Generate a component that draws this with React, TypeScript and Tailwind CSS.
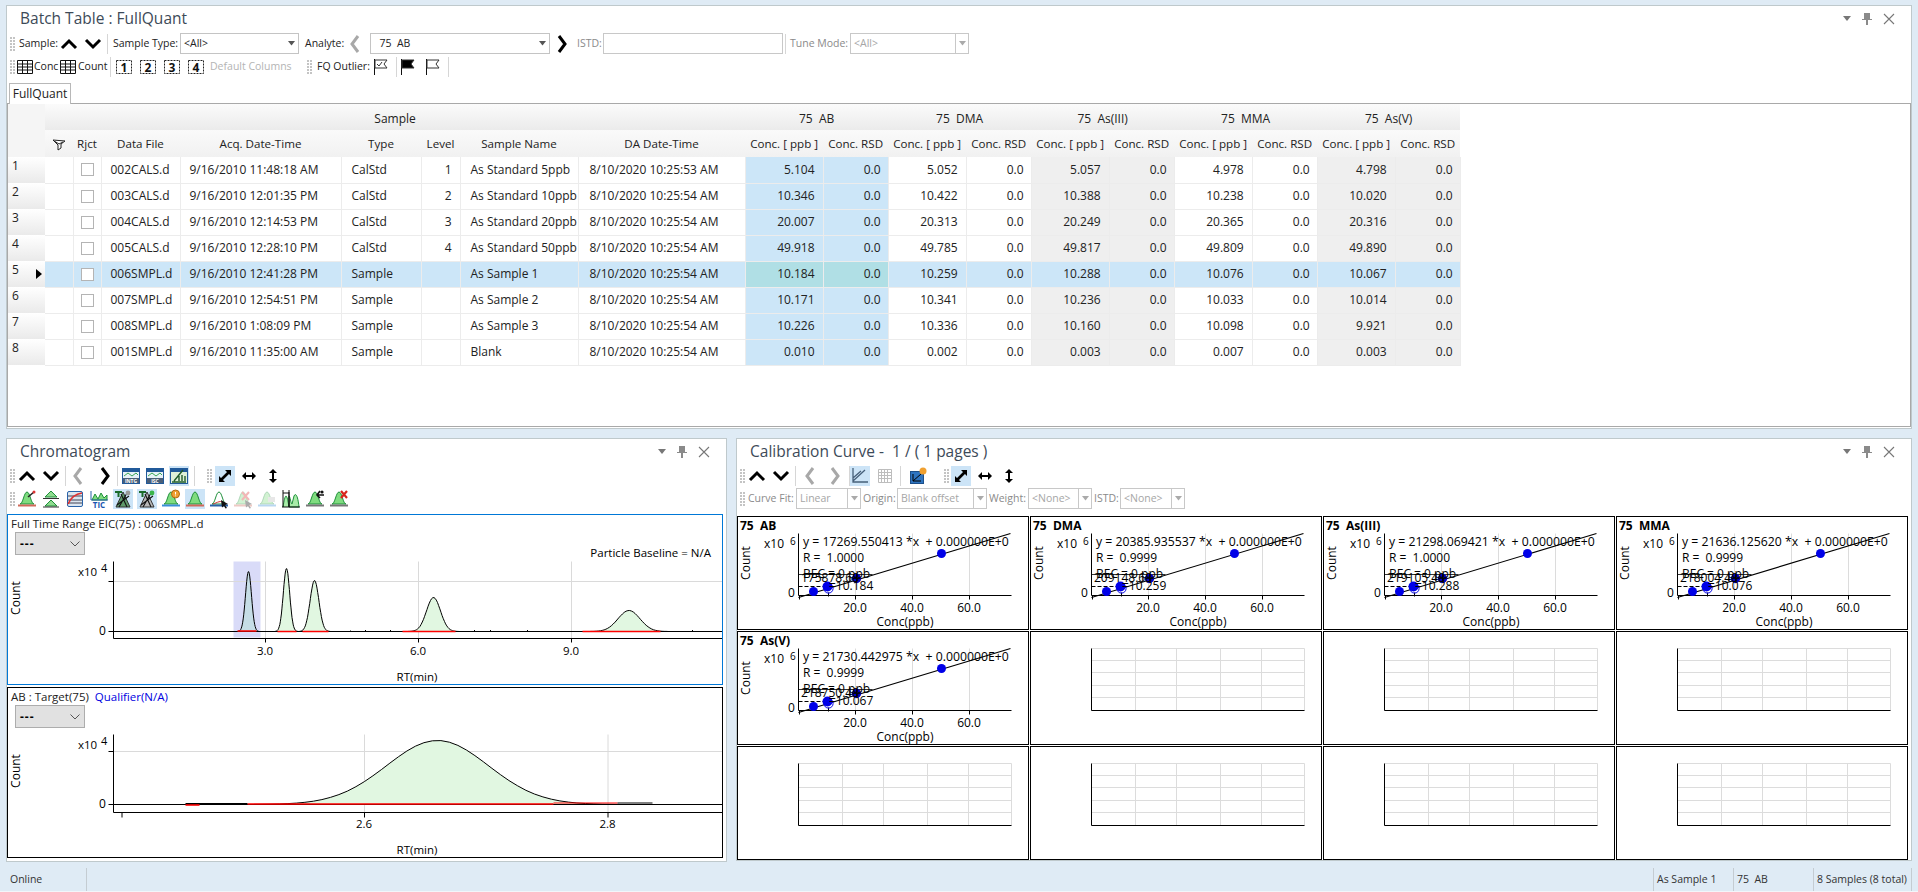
import React from "react";

const gaussPts = (cx: number, top: number, s: number, base: number) => {
  const pts: string[] = [];
  for (let x = cx - 3.6 * s; x <= cx + 3.6 * s; x += Math.max(s / 6, 0.5)) {
    const y = base - (base - top) * Math.exp(-((x - cx) ** 2) / (2 * s * s));
    pts.push(`${x.toFixed(1)},${y.toFixed(1)}`);
  }
  return pts;
};

const Grip = () => (
  <svg width="6" height="16" viewBox="0 0 6 16" className="shrink-0">
    {[1, 4, 7, 10, 13].flatMap((y) => [1, 4].map((x) => <rect key={`${x}-${y}`} x={x} y={y} width="2" height="2" fill="#c4c4c4" />))}
  </svg>
);
const Sep = ({ c = "mx-[2px]" }: { c?: string }) => <div className={`w-px h-[20px] bg-[#d6d6d6] shrink-0 ${c}`} />;

const Chev = ({ d, dim }: { d: "u" | "d" | "l" | "r"; dim?: boolean }) => {
  const p = { u: "M2 13 L9 6 L16 13", d: "M2 5 L9 12 L16 5", l: "M12 1 L6 9 L12 17", r: "M6 1 L12 9 L6 17" }[d];
  return (
    <svg width="18" height="18" viewBox="0 0 18 18">
      <path d={p} fill="none" stroke={dim ? "#a8a8a8" : "#000"} strokeWidth="3" />
    </svg>
  );
};
const Btn = ({ active, children, c = "mx-[2px]" }: { active?: boolean; children: React.ReactNode; c?: string }) => (
  <div className={`w-[20px] h-[20px] flex items-center justify-center shrink-0 ${c} ${active ? "bg-[#cce4f7]" : ""}`}>{children}</div>
);
const ExpandBoth = () => (
  <svg width="16" height="16" viewBox="0 0 16 16">
    <path d="M4 12 L12 4" stroke="#000" strokeWidth="2.6" />
    <path d="M8 2 H14 V8 Z M2 8 V14 H8 Z" fill="#000" />
  </svg>
);
const ExpandH = () => (
  <svg width="16" height="16" viewBox="0 0 16 16">
    <path d="M4 8 H12" stroke="#000" strokeWidth="2" />
    <path d="M5 4 V12 L1 8 Z M11 4 V12 L15 8 Z" fill="#000" />
  </svg>
);
const ExpandV = () => (
  <svg width="16" height="16" viewBox="0 0 16 16">
    <path d="M8 4 V12" stroke="#000" strokeWidth="2" />
    <path d="M4 5 H12 L8 1 Z M4 11 H12 L8 15 Z" fill="#000" />
  </svg>
);

const PanelControls = () => (
  <div className="flex items-center gap-[11px] shrink-0">
    <svg width="8" height="6" viewBox="0 0 8 6"><path d="M0 0 H8 L4 5 Z" fill="#777" /></svg>
    <svg width="10" height="14" viewBox="0 0 10 14"><path d="M2 1 H8 V7 H10 V8 H6 V13 H4 V8 H0 V7 H2 Z" fill="#8a8a8a" /></svg>
    <svg width="12" height="12" viewBox="0 0 12 12"><path d="M1 1 L11 11 M11 1 L1 11" stroke="#777" strokeWidth="1.1" /></svg>
  </div>
);

const Title = ({ text, c }: { text: string; c: string }) => (
  <div className={`flex items-center justify-between h-[26px] shrink-0 ${c}`}>
    <span className="text-[15.5px] text-[#3d4a58] whitespace-pre">{text}</span>
    <PanelControls />
  </div>
);

const Combo = ({ text, w, disabled, split }: { text: string; w: string; disabled?: boolean; split?: boolean }) => (
  <div className={`flex items-center h-[21px] border shrink-0 text-[10.5px] ${w} ${disabled ? "border-[#c8c8c8] text-[#a6a6a6]" : "border-[#c4c4c4] text-[#222]"}`}>
    <span className="pl-[3px] flex-1 whitespace-pre truncate">{text}</span>
    <div className={`w-[13px] h-full flex items-center justify-center ${split ? "border-l border-[#c8c8c8]" : ""}`}>
      <svg width="7" height="5" viewBox="0 0 7 5"><path d="M0 0 H7 L3.5 4.5 Z" fill={disabled ? "#aaa" : "#555"} /></svg>
    </div>
  </div>
);
const Lbl = ({ t, c = "", dim }: { t: string; c?: string; dim?: boolean }) => (
  <span className={`text-[10.5px] whitespace-pre shrink-0 ${dim ? "text-[#8a8a8a]" : "text-[#222]"} ${c}`}>{t}</span>
);

const TableIcon = () => (
  <svg width="16" height="14" viewBox="0 0 16 14" className="shrink-0">
    <path d="M.5.5 H15.5 V13.5 H.5 Z M.5 4 H15.5 M.5 7 H15.5 M.5 10 H15.5 M5.5 .5 V13.5 M10.5 .5 V13.5" fill="none" stroke="#111" />
  </svg>
);
const NumIcon = ({ n }: { n: number }) => (
  <svg width="16" height="14" viewBox="0 0 16 14">
    <rect x=".5" y=".5" width="15" height="13" fill="#fff" stroke="#222" strokeDasharray="2 1" />
    <text x="8" y="11.5" textAnchor="middle" className="text-[12px] font-bold" fill="#111">{n}</text>
  </svg>
);
const Flag = ({ fill, check }: { fill?: boolean; check?: boolean }) => (
  <svg width="16" height="18" viewBox="0 0 16 18">
    <path d="M1.5 1 V17" stroke="#111" />
    <path d="M2 2 H14 L11 6 L14 10 H2 Z" fill={fill ? "#000" : "#fff"} stroke="#333" />
    {check && <path d="M4 6 L6 8 L9 4" fill="none" stroke="#333" />}
  </svg>
);

/* ------- peak toolbar icons ------- */
const PEAK = "M3 15 C6 15 7 3 10 3 C13 3 14 15 17 15 Z";
const Pk = ({ base = "#d06a5a", fill = "#7fdc7f", stroke = "#1e8f3a", dim, children }: { base?: string; fill?: string; stroke?: string; dim?: boolean; children?: React.ReactNode }) => (
  <svg width="20" height="20" viewBox="0 0 20 20" opacity={dim ? 0.35 : 1}>
    <path d={PEAK} fill={fill} stroke={stroke} />
    <path d="M1 16.5 H19" stroke={base} strokeWidth="2" />
    {children}
  </svg>
);
const Cursor = () => <path d="M12 11 L19 15 L16 16 L18 19 L16.5 19.5 L15 17 L13 18.5 Z" fill="#111" />;
const TicTree = ({ g }: { g?: boolean }) => (
  <svg width="20" height="20" viewBox="0 0 20 20">
    <path d="M10 3 L17 18 H3 Z" fill={g ? "#b8b8b8" : "#5e9a6a"} stroke="#333" />
    <path d="M4 16 L16 7 M6 18 L14 4 M14 18 L8 5" stroke="#111" strokeWidth="1.1" />
    <path d="M2 3 H9 M5.5 3 V8" stroke="#1a6b2a" strokeWidth="2" />
    <circle cx="15" cy="4" r="2.4" fill={g ? "#3ab54a" : "#9a9a9a"} />
  </svg>
);
const MonitorIcon = ({ t, active }: { t: string; active?: boolean }) => (
  <svg width="18" height="18" viewBox="0 0 18 18">
    <rect x=".5" y="1.5" width="17" height="15" fill={active ? "#dff1d8" : "#e8f2f8"} stroke="#215a9a" />
    <rect x="1" y="2" width="16" height="3" fill="#215a9a" />
    {active ? (
      <path d="M4 14 L13 3 M2 15 H16 M9 14 V9 M12 14 V8 M15 14 V9" stroke="#1f5c2a" strokeWidth="1.4" />
    ) : (
      <>
        <path d="M2 9 L6 6 L10 9 L14 6 L16 8" fill="none" stroke="#3aa655" />
        <rect x="1" y="11" width="16" height="5" fill="#4a5f78" />
        <text x="9" y="15.5" textAnchor="middle" fill="#fff" className="text-[5px] font-bold">{t}</text>
      </>
    )}
  </svg>
);

const ChromRow2 = () => (
  <div className="flex items-center h-[24px] pl-[2px]">
    <Grip />
    <Btn><Pk><path d="M11 8 L17 3" stroke="#222" strokeWidth="1.6" /><circle cx="17" cy="3" r="1.5" fill="#d33" /></Pk></Btn>
    <Btn>
      <svg width="20" height="20" viewBox="0 0 20 20">
        <path d="M10 2 L16 8 H4 Z M10 11 L16 17 H4 Z" fill="#8fdc8f" stroke="#1e8f3a" />
        <path d="M2 9.5 H18 M2 18 H18" stroke="#333" />
      </svg>
    </Btn>
    <Btn>
      <svg width="20" height="20" viewBox="0 0 20 20">
        <rect x="2.5" y="2.5" width="15" height="15" rx="1.5" fill="#dbe6f0" stroke="#2a63a8" />
        <path d="M3 7 H17 M3 11 H17 M3 14 H17" stroke="#445" />
        <path d="M3 15 C6 8 10 5 17 4" fill="none" stroke="#d33" strokeWidth="1.6" />
      </svg>
    </Btn>
    <Btn>
      <svg width="20" height="20" viewBox="0 0 20 20">
        <path d="M3 11 L6 5 L9 10 L12 4 L15 9 L18 6 V11 Z" fill="#7fdc7f" stroke="#1e8f3a" />
        <path d="M2 2 V11 H19" fill="none" stroke="#2a63a8" />
        <text x="10" y="19" textAnchor="middle" fill="#1a55b0" className="text-[8px] font-bold">TIC</text>
      </svg>
    </Btn>
    <Btn active><TicTree /></Btn>
    <Btn active><TicTree g /></Btn>
    <Btn><Pk base="#3a8fd8"><circle cx="14.5" cy="5" r="4" fill="#f0a030" stroke="#b06a10" /><path d="M14.5 3 V5.5 M14.5 6.5 V7.2" stroke="#fff" /></Pk></Btn>
    <Btn active><Pk /></Btn>
    <Btn><Pk fill="#fff" stroke="#1e8f3a" base="#2a63a8"><path d="M4 15 C8 14 12 10 16 15" stroke="#c33" fill="none" /><Cursor /></Pk></Btn>
    <Btn><Pk dim><path d="M9 3 L16 11 M16 3 L9 11" stroke="#d33" strokeWidth="2" /><Cursor /></Pk></Btn>
    <Btn><Pk dim base="#3a8fd8"><path d="M11 8 H18 V13 H11 Z" fill="#bbb" /></Pk></Btn>
    <Btn>
      <svg width="20" height="20" viewBox="0 0 20 20">
        <path d="M8 18 V7 C9 7 10 15 11 15 L13 7 C15 3 17 8 18 18 Z M2 18 C3 12 4 7 5 7 C6 7 7 12 8 18" fill="#a8eca8" stroke="#1e8f3a" />
        <path d="M2 1 V18 M8 1 V18 M2 4 H8 M1 18 H19 M8 3 V18" stroke="#111" />
      </svg>
    </Btn>
    <Btn><Pk base="#777"><path d="M12 6 H19 M15 2 L12 6 L15 9" fill="none" stroke="#111" strokeWidth="1.6" /><circle cx="17" cy="3" r="1.6" fill="#111" /></Pk></Btn>
    <Btn><Pk base="#777"><path d="M12 2 L18 9 M18 2 L12 9" stroke="#d8261c" strokeWidth="2.2" /></Pk></Btn>
  </div>
);

const ChromRow1 = () => (
  <div className="flex items-center h-[22px] pl-[2px]">
    <Grip />
    <Btn><Chev d="u" /></Btn>
    <Btn><Chev d="d" /></Btn>
    <Sep c="ml-[2px] mr-0" />
    <Btn c="mx-[2px]"><Chev d="l" dim /></Btn>
    <Btn c="ml-[5px] mr-[2px]"><Chev d="r" /></Btn>
    <Sep c="mx-0" />
    <Btn c="ml-[3px] mr-[2px]"><MonitorIcon t="INTG" /></Btn>
    <Btn><MonitorIcon t="ISC" /></Btn>
    <Btn active><MonitorIcon t="" active /></Btn>
    <Sep c="ml-[3px] mr-[11px]" />
    <Grip />
    <Btn active c="ml-[3px] mr-[2px]"><ExpandBoth /></Btn>
    <Btn><ExpandH /></Btn>
    <Btn c="mx-[2px]"><ExpandV /></Btn>
  </div>
);

const TraceSelect = () => (
  <div className="flex items-center justify-between w-[70px] h-[23px] bg-[#e1e1e1] border border-[#adadad] ml-[4px] px-[4px] text-[12px] text-black">
    <span className="font-bold tracking-[1px]">---</span>
    <svg width="10" height="6" viewBox="0 0 10 6"><path d="M.5.5 L5 5 L9.5.5" fill="none" stroke="#555" /></svg>
  </div>
);

const t12 = "text-[12px] whitespace-pre";
const t11 = "text-[11.5px] whitespace-pre";

const TopPlot = () => {
  const peaks = [
    [248, 570, 3],
    [286, 567, 3.2],
    [314, 579, 4.4],
    [433, 596, 7],
    [628.5, 609, 11],
  ];
  return (
    <svg viewBox="8 514 714 169" className="block w-[714px] h-[169px]">
      <g transform="translate(.5 .5)">
        <rect x="233" y="560" width="27" height="76" fill="#d9dbf8" />
        {[265, 418, 571].map((x) => <path key={x} d={`M${x} 560 V637`} stroke="#dadada" />)}
        <path d="M113 580 H722" stroke="#dadada" />
        {peaks.map(([c, t, s], i) => {
          const p = gaussPts(c, t, s, 630);
          return (
            <g key={i}>
              <polygon points={p.join(" ")} fill={i === 0 ? "#c6dde6" : "#e1f7e1"} />
              <polyline points={p.join(" ")} fill="none" stroke="#000" />
            </g>
          );
        })}
        <path d="M113 630 H722" stroke="#000" />
        <path d="M237 629.5 H256 M277 630 H296 M302 630 H328 M402 630 H455 M582 630 H660" stroke="#f00" strokeWidth="1.3" />
        <path d="M350 630 V629 M365 630 V628.5 M390 630 V628.5 M474 630 V628.5 M490 630 V628.5 M527 630 V628.5 M692 630 V628.5" stroke="#000" />
        <path d="M113 560 V637 H722 M108 580 H113 M108 630 H113 M265 637 V641 M418 637 V641 M571 637 V641" fill="none" stroke="#000" />
      </g>
      <text x="78" y="575" className={t11}>x10</text>
      <text x="101" y="571" className="text-[11px]">4</text>
      <text x="99" y="634" className={t12}>0</text>
      <text x="20" y="597" textAnchor="middle" transform="rotate(-90 20 597)" className={t12}>Count</text>
      {[[265, "3.0"], [418, "6.0"], [571, "9.0"]].map(([x, l]) => <text key={l} x={x} y="654" textAnchor="middle" className={t11}>{l}</text>)}
      <text x="417" y="680" textAnchor="middle" className={t11}>RT(min)</text>
      <text x="711" y="556" textAnchor="end" className={t11}>Particle Baseline = N/A</text>
    </svg>
  );
};

const BottomPlot = () => {
  const p = gaussPts(437, 739, 51, 803);
  return (
    <svg viewBox="8 687 714 169" className="block w-[714px] h-[169px]">
      <g transform="translate(.5 .5)">
        {[364, 607.5].map((x) => <path key={x} d={`M${x} 733 V811`} stroke="#dadada" />)}
        <path d="M113 750 H722" stroke="#dadada" />
        <polygon points={p.join(" ")} fill="#e1f7e1" />
        <polyline points={p.join(" ")} fill="none" stroke="#000" />
        <path d="M113 803 H722" stroke="#000" />
        <path d="M247 802.5 H553" stroke="#f00" strokeWidth="1.4" />
        <path d="M185 803.5 H199" stroke="#f00" strokeWidth="1.6" />
        <path d="M553 801.5 H617" stroke="#f00" />
        <path d="M185 802 H247 M617 801.5 H652" stroke="#000" />
        <path d="M113 733 V811 H722 M108 750 H113 M108 803 H113 M121.5 811 V816 M364 811 V816 M607.5 811 V816" fill="none" stroke="#000" />
      </g>
      <text x="78" y="748" className={t11}>x10</text>
      <text x="101" y="744" className="text-[11px]">4</text>
      <text x="99" y="807" className={t12}>0</text>
      <text x="20" y="770" textAnchor="middle" transform="rotate(-90 20 770)" className={t12}>Count</text>
      <text x="364" y="827" textAnchor="middle" className={t11}>2.6</text>
      <text x="607.5" y="827" textAnchor="middle" className={t11}>2.8</text>
      <text x="417" y="853" textAnchor="middle" className={t11}>RT(min)</text>
    </svg>
  );
};

const CalCell = ({ title, eq, r, over, val }: { title: string; eq: string; r: string; over: string; val: string }) => (
  <div className="border border-black bg-white">
    <svg viewBox="1 1 290 112" className="block w-full h-full">
      <g transform="translate(.5 .5)">
        {[118, 175, 232].map((x) => <path key={x} d={`M${x} 17 V79`} stroke="#dcdcdc" />)}
        <path d="M61 17 V79 H274 M62 79 V83" fill="none" stroke="#000" />
        <path d="M118 79 V83 M175 79 V83 M232 79 V83" stroke="#000" />
        <path d="M61 81 L273 17" stroke="#000" strokeWidth="1.1" />
        <path d="M61 58 H135" stroke="#000" strokeWidth=".8" />
        <path d="M61 70 H91 M91 70 V81" stroke="#000" strokeDasharray="4 2" />
        <circle cx="76" cy="75" r="4.5" fill="#0000e8" />
        <circle cx="90" cy="70" r="5" fill="#0000e8" />
        <circle cx="91" cy="72" r="4.6" fill="none" stroke="#0000e8" />
        <circle cx="119" cy="62" r="4.7" fill="#0000c8" />
        <circle cx="204" cy="37" r="4.5" fill="#0000e8" />
        <path d="M115 62 H123 M119 58 V66" stroke="#002" />
      </g>
      <text x="3" y="14" className="text-[12px] font-bold whitespace-pre">{title}</text>
      <text x="66" y="30" className="text-[12.25px] whitespace-pre">{eq}</text>
      <text x="66" y="46" className={t12}>{r}</text>
      <text x="66" y="62" className={t12}>BEC = 0 ppb</text>
      <text x="64" y="66" className={t12}>{over}</text>
      <text x="92" y="74" className={t12}>{val}</text>
      <text x="27" y="32" className={t12}>x10</text>
      <text x="53" y="29" className="text-[10px]">6</text>
      <text x="51" y="81" className={t12}>0</text>
      <text x="13" y="47" textAnchor="middle" transform="rotate(-90 13 47)" className={t12}>Count</text>
      {[[118, "20.0"], [175, "40.0"], [232, "60.0"]].map(([x, l]) => <text key={l} x={x} y="96" textAnchor="middle" className={t12}>{l}</text>)}
      <text x="168" y="110" textAnchor="middle" className={t12}>Conc(ppb)</text>
    </svg>
  </div>
);

const EmptyCell = () => (
  <div className="border border-black bg-white">
    <svg viewBox="1 1 290 112" className="block w-full h-full">
      <g transform="translate(.5 .5)">
        {[105, 146, 190, 231, 274].map((x) => <path key={x} d={`M${x} 17 V79`} stroke="#dcdcdc" />)}
        {[17, 29, 41, 54, 66].map((y) => <path key={y} d={`M61 ${y} H274`} stroke="#dcdcdc" />)}
        <path d="M61 17 V79 H274" fill="none" stroke="#000" />
      </g>
    </svg>
  </div>
);

const rows = [
  ["002CALS.d", "9/16/2010 11:48:18 AM", "CalStd", "1", "As Standard 5ppb", "8/10/2020 10:25:53 AM", "5.104", "5.052", "5.057", "4.978", "4.798"],
  ["003CALS.d", "9/16/2010 12:01:35 PM", "CalStd", "2", "As Standard 10ppb", "8/10/2020 10:25:54 AM", "10.346", "10.422", "10.388", "10.238", "10.020"],
  ["004CALS.d", "9/16/2010 12:14:53 PM", "CalStd", "3", "As Standard 20ppb", "8/10/2020 10:25:54 AM", "20.007", "20.313", "20.249", "20.365", "20.316"],
  ["005CALS.d", "9/16/2010 12:28:10 PM", "CalStd", "4", "As Standard 50ppb", "8/10/2020 10:25:54 AM", "49.918", "49.785", "49.817", "49.809", "49.890"],
  ["006SMPL.d", "9/16/2010 12:41:28 PM", "Sample", "", "As Sample 1", "8/10/2020 10:25:54 AM", "10.184", "10.259", "10.288", "10.076", "10.067"],
  ["007SMPL.d", "9/16/2010 12:54:51 PM", "Sample", "", "As Sample 2", "8/10/2020 10:25:54 AM", "10.171", "10.341", "10.236", "10.033", "10.014"],
  ["008SMPL.d", "9/16/2010 1:08:09 PM", "Sample", "", "As Sample 3", "8/10/2020 10:25:54 AM", "10.226", "10.336", "10.160", "10.098", "9.921"],
  ["001SMPL.d", "9/16/2010 11:35:00 AM", "Sample", "", "Blank", "8/10/2020 10:25:54 AM", "0.010", "0.002", "0.003", "0.007", "0.003"],
];
const analytes = ["75  AB", "75  DMA", "75  As(III)", "75  MMA", "75  As(V)"];
const colW = [
  "w-[37px]", "w-[28px]", "w-[28px]", "w-[79px]", "w-[161px]", "w-[80px]", "w-[39px]", "w-[118px]", "w-[167px]",
];
const cb = "border-r border-b border-[#ececec]";
const h1 = "bg-gradient-to-b from-[#fbfbfb] to-[#ebebeb] font-normal text-center whitespace-pre p-0 pt-[3px]";
const h2 = "bg-gradient-to-b from-[#fafafa] to-[#f1f1f1] font-normal text-center whitespace-nowrap p-0 text-[11.6px]";

const BatchTable = () => (
  <table className="table-fixed border-collapse text-[12px] text-[#222] w-[1452px]">
    <colgroup>
      {colW.map((w, i) => <col key={i} className={w} />)}
      {analytes.map((a) => (
        <React.Fragment key={a}>
          <col className="w-[78px]" />
          <col className="w-[65px]" />
        </React.Fragment>
      ))}
    </colgroup>
    <thead>
      <tr className="h-[26px]">
        <th rowSpan={2} className="bg-[#f5f5f5] p-0" />
        <th colSpan={8} className={h1}>Sample</th>
        {analytes.map((a) => <th key={a} colSpan={2} className={h1}>{a}</th>)}
      </tr>
      <tr className="h-[27px]">
        <th className={h2}>
          <svg width="14" height="12" viewBox="0 0 14 12" className="inline-block">
            <path d="M1 1 L13 2 L9 5 L9 9 L6 11 L6 6 Z M3 2.5 L7 5 M11 3 L7 5" fill="#fff" stroke="#222" />
          </svg>
        </th>
        {["Rjct", "Data File", "Acq. Date-Time", "Type", "Level", "Sample Name", "DA Date-Time"].map((h) => <th key={h} className={h2}>{h}</th>)}
        {analytes.flatMap((a) => [
          <th key={a + "c"} className={h2}>Conc. [ ppb ]</th>,
          <th key={a + "r"} className={h2}>Conc. RSD</th>,
        ])}
      </tr>
    </thead>
    <tbody>
      {rows.map((r, i) => {
        const sel = i === 4;
        const rowBg = sel ? "bg-[#cce6f8]" : "bg-white";
        return (
          <tr key={i} className="h-[26px]">
            <td className="bg-gradient-to-b from-white to-[#eaeaea] p-0 align-top">
              <div className="flex items-center justify-between pl-[4px] pr-[3px] h-[25px]">
                <span className="self-start leading-[17px]">{i + 1}</span>
                {sel && <svg width="6" height="10" viewBox="0 0 6 10"><path d="M0 0 L6 5 L0 10 Z" fill="#000" /></svg>}
              </div>
            </td>
            <td className={`${rowBg} ${cb} p-0`} />
            <td className={`${rowBg} ${cb} p-0`}>
              <div className="w-[13px] h-[13px] mx-auto border border-[#b4b4b4] bg-white" />
            </td>
            <td className={`${rowBg} ${cb} pl-[9px] pr-0 whitespace-nowrap`}>{r[0]}</td>
            <td className={`${rowBg} ${cb} pl-[9px] pr-0 whitespace-nowrap`}>{r[1]}</td>
            <td className={`${rowBg} ${cb} pl-[10px] pr-0`}>{r[2]}</td>
            <td className={`${rowBg} ${cb} pr-[8px] text-right`}>{r[3]}</td>
            <td className={`${rowBg} ${cb} pl-[10px] pr-0 whitespace-nowrap`}>{r[4]}</td>
            <td className={`${rowBg} ${cb} pl-[11px] pr-0 whitespace-nowrap`}>{r[5]}</td>
            {analytes.flatMap((a, k) => {
              const bg = sel
                ? k === 0 ? "bg-[#b0dfe5]" : "bg-[#cce6f8]"
                : k === 0 ? "bg-[#cce6f8]" : k % 2 === 0 ? "bg-[#efefef]" : "bg-white";
              const edge = k === 0 ? "border-l border-l-[#8a8a8a]" : "";
              return [
                <td key={a + "c"} className={`${bg} ${cb} ${edge} pr-[8px] text-right`}>{r[6 + k]}</td>,
                <td key={a + "r"} className={`${bg} ${cb} pr-[7px] text-right`}>0.0</td>,
              ];
            })}
          </tr>
        );
      })}
    </tbody>
  </table>
);

export default function App() {
  return (
    <div className="w-[1918px] h-[892px] overflow-hidden bg-[#dfebf5] flex flex-col font-['Open_Sans','Noto_Sans',sans-serif] text-[#222]">
      <div className="flex-1 flex flex-col px-[6px] pt-[5px] min-h-0">
        {/* Batch table panel */}
        <section className="h-[424px] shrink-0 bg-white border border-[#bfc9cc] flex flex-col">
          <Title text="Batch Table : FullQuant" c="pl-[13px] pr-[16px]" />
          <div className="flex items-center h-[23px] pl-[2px] shrink-0">
            <Grip />
            <Lbl t="Sample:" c="ml-[4px] w-[39px]" />
            <Btn c="ml-[1px] mr-[4px]"><Chev d="u" /></Btn>
            <Btn c="mx-0"><Chev d="d" /></Btn>
            <Sep c="ml-[4px] mr-[5px]" />
            <Lbl t="Sample Type:" c="w-[65px]" />
            <Combo text="<All>" w="w-[119px] ml-[2px]" />
            <Lbl t="Analyte:" c="ml-[6px] w-[40px]" />
            <Btn c="mx-0"><Chev d="l" dim /></Btn>
            <Combo text="  75  AB" w="w-[180px] ml-[5px]" />
            <Btn c="ml-[2px] mr-[5px]"><Chev d="r" /></Btn>
            <Lbl t="ISTD:" dim c="w-[24px]" />
            <div className="w-[180px] h-[21px] border border-[#c8c8c8] ml-[2px] shrink-0" />
            <Sep c="ml-[2px] mr-[4px]" />
            <Lbl t="Tune Mode:" dim c="w-[58px]" />
            <Combo text="<All>" w="w-[119px] ml-[2px]" disabled split />
          </div>
          <div className="flex items-center h-[24px] pl-[2px] shrink-0">
            <Grip />
            <div className="ml-[2px]"><TableIcon /></div>
            <Lbl t="Conc" c="ml-[1px] w-[23px]" />
            <div className="ml-[3px]"><TableIcon /></div>
            <Lbl t="Count" c="ml-[2px] w-[28px]" />
            <Sep c="ml-[4px] mr-[5px]" />
            <div className="flex gap-[8px]">{[1, 2, 3, 4].map((n) => <NumIcon key={n} n={n} />)}</div>
            <Lbl t="Default Columns" c="ml-[6px] w-[81px] text-[#b4b4b4]" dim />
            <div className="ml-[15px]"><Grip /></div>
            <Lbl t="FQ Outlier:" c="ml-[5px] w-[53px]" />
            <div className="ml-[3px]"><Flag check /></div>
            <Sep c="ml-[7px] mr-[3px]" />
            <Flag fill />
            <div className="ml-[9px]"><Flag /></div>
            <Sep c="ml-[7px]" />
          </div>
          <div className="h-[3px] shrink-0" />
          <div className="h-[21px] shrink-0 flex items-end pl-[2px]">
            <div className="w-[62px] h-[21px] border border-b-0 border-[#b8b8b8] flex items-center justify-center text-[12px] -mb-px bg-white relative">FullQuant</div>
          </div>
          <div className="flex-1 min-h-0 border border-[#a9a9a9] mb-[1px] overflow-hidden">
            <BatchTable />
          </div>
        </section>

        <div className="flex gap-[9px] mt-[9px]">
          {/* Chromatogram panel */}
          <section className="w-[721px] h-[424px] shrink-0 bg-white border border-[#bfc9cc] flex flex-col">
            <Title text="Chromatogram" c="pl-[13px] pr-[16px]" />
            <ChromRow1 />
            <ChromRow2 />
            <div className="h-[3px]" />
            <div className="relative border border-[#0078d7] h-[171px] w-[716px] shrink-0">
              <TopPlot />
              <div className="absolute left-[3px] top-[1px] text-[11.5px] whitespace-pre">
                <div className="leading-[16px]">Full Time Range EIC(75) : 006SMPL.d</div>
                <TraceSelect />
              </div>
            </div>
            <div className="relative border border-black h-[171px] w-[716px] mt-[2px] shrink-0">
              <BottomPlot />
              <div className="absolute left-[3px] top-[1px] text-[11.5px] whitespace-pre">
                <div className="leading-[16px]">AB : Target(75)  <span className="text-[#0000e0]">Qualifier(N/A)</span></div>
                <TraceSelect />
              </div>
            </div>
          </section>

          {/* Calibration panel */}
          <section className="w-[1176px] h-[423px] shrink-0 bg-white border border-[#bfc9cc] flex flex-col">
            <Title text="Calibration Curve -  1 / ( 1 pages )" c="pl-[13px] pr-[16px]" />
            <div className="flex items-center h-[22px] pl-[2px] shrink-0">
              <Grip />
              <Btn c="ml-[2px] mr-[2px]"><Chev d="u" /></Btn>
              <Btn><Chev d="d" /></Btn>
              <Sep c="ml-[2px] mr-[2px]" />
              <Btn><Chev d="l" dim /></Btn>
              <Btn c="ml-[3px] mr-[2px]"><Chev d="r" dim /></Btn>
              <Sep c="ml-[2px] mr-0" />
              <Btn active c="ml-0 mr-[3px]">
                <svg width="18" height="18" viewBox="0 0 18 18">
                  <path d="M2 1 V15 H17 M2 14 L14 3 M2 11 L10 4" fill="none" stroke="#46607a" strokeWidth="1.3" />
                </svg>
              </Btn>
              <Btn>
                <svg width="14" height="14" viewBox="0 0 14 14">
                  <path d="M.5.5 H13.5 V13.5 H.5 Z M.5 3.5 H13.5 M.5 6.5 H13.5 M.5 9.5 H13.5 M3.5 .5 V13.5 M6.5 .5 V13.5 M9.5 .5 V13.5" fill="none" stroke="#bdbdbd" />
                </svg>
              </Btn>
              <Sep c="ml-[3px] mr-[5px]" />
              <Btn>
                <svg width="18" height="18" viewBox="0 0 18 18">
                  <rect x="1.5" y="4.5" width="13" height="12" fill="#2e74c0" stroke="#1c4f8a" />
                  <path d="M4 14 L12 7 M4 7 V14 H12" fill="none" stroke="#000" />
                  <circle cx="14" cy="4" r="3.5" fill="#f0a030" />
                </svg>
              </Btn>
              <Sep c="ml-[4px] mr-[8px] opacity-0" />
              <Grip />
              <Btn active c="ml-[2px] mr-[2px]"><ExpandBoth /></Btn>
              <Btn><ExpandH /></Btn>
              <Btn><ExpandV /></Btn>
            </div>
            <div className="flex items-center h-[23px] pl-[2px] shrink-0">
              <Grip />
              <Lbl t="Curve Fit:" c="ml-[3px] w-[46px]" dim />
              <Combo text="Linear" w="w-[65px] ml-[2px]" disabled split />
              <Lbl t="Origin:" c="ml-[2px] w-[32px]" dim />
              <Combo text="Blank offset" w="w-[90px] ml-[2px]" disabled split />
              <Lbl t="Weight:" c="ml-[2px] w-[37px]" dim />
              <Combo text="<None>" w="w-[64px] ml-[2px]" disabled split />
              <Lbl t="ISTD:" c="ml-[2px] w-[26px]" dim />
              <Combo text="<None>" w="w-[65px]" disabled split />
            </div>
            <div className="h-[6px] shrink-0" />
            <div className="grid grid-cols-[repeat(4,292px)] grid-rows-[repeat(3,114px)] gap-[1px] w-fit">
              <CalCell title="75  AB" eq="y = 17269.550413 *x  + 0.000000E+0" r="R =  1.0000" over="175878.68" val="=10.184" />
              <CalCell title="75  DMA" eq="y = 20385.935537 *x  + 0.000000E+0" r="R =  0.9999" over="209148.68" val="=10.259" />
              <CalCell title="75  As(III)" eq="y = 21298.069421 *x  + 0.000000E+0" r="R =  1.0000" over="219105.48" val="=10.288" />
              <CalCell title="75  MMA" eq="y = 21636.125620 *x  + 0.000000E+0" r="R =  0.9999" over="218004.48" val="=10.076" />
              <CalCell title="75  As(V)" eq="y = 21730.442975 *x  + 0.000000E+0" r="R =  0.9999" over="218750.48" val="=10.067" />
              {Array.from({ length: 7 }).map((_, i) => <EmptyCell key={i} />)}
            </div>
          </section>
        </div>
      </div>

      {/* Status bar */}
      <footer className="h-[24px] shrink-0 flex items-stretch text-[10.5px] text-[#333] border-b border-b-[#f2f6fa] pr-[6px]">
        <div className="w-[87px] pl-[10px] flex items-center border-r border-[#c4ccd2]">Online</div>
        <div className="flex-1" />
        <div className="w-[80px] pl-[3px] flex items-center border-l border-[#c4ccd2]">As Sample 1</div>
        <div className="w-[80px] pl-[3px] flex items-center border-l border-[#c4ccd2] whitespace-pre">75  AB</div>
        <div className="w-[99px] pl-[3px] flex items-center border-x border-[#c4ccd2] whitespace-nowrap">8 Samples (8 total)</div>
      </footer>
    </div>
  );
}
